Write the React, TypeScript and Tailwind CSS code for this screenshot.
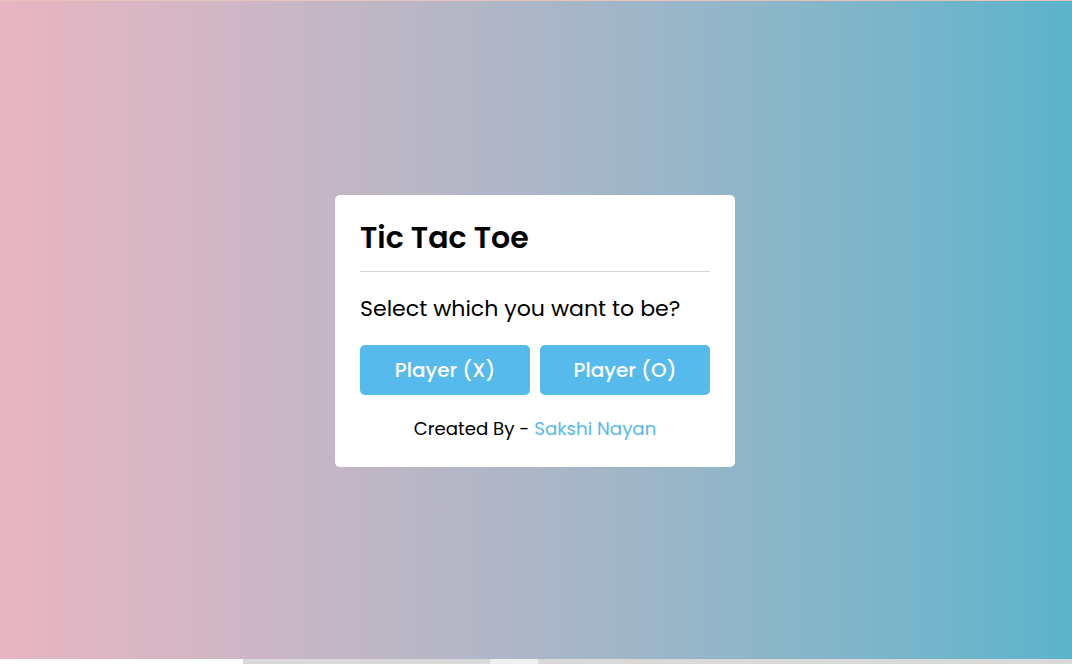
import React, { useState } from 'react';

const App: React.FC = () => {
  const [player, setPlayer] = useState<string | null>(null);

  return (
    <div className="w-full h-[664px] flex flex-col overflow-hidden font-['Poppins','Inter',sans-serif]">
      <div className="h-px bg-[#e6c3bd]" />
      <div className="flex-1 flex items-center justify-center pr-[2px] pt-[2px] bg-gradient-to-r from-[#e9b5c2] to-[#5ab4cb]">
        <div className="w-[400px] bg-white rounded-[5px] px-[25px] pt-[20px] pb-[25px]">
          <h1 className="text-[30px] font-semibold text-black leading-[45px]">Tic Tac Toe</h1>
          <div className="h-px bg-[#d4d4d4] mt-[11px]" />
          <p className="text-[22.1px] text-black mt-[20px] leading-[33px]">Select which you want to be?</p>
          <div className="flex gap-[10px] mt-[20px]">
            <button
              onClick={() => setPlayer('X')}
              className="flex-1 h-[50px] rounded-[5px] bg-[#56baec] text-white text-[20px] font-medium"
            >
              Player (X)
            </button>
            <button
              onClick={() => setPlayer('O')}
              className="flex-1 h-[50px] rounded-[5px] bg-[#56baec] text-white text-[20px] font-medium"
            >
              Player (O)
            </button>
          </div>
          <p className="text-center text-[18.2px] text-black mt-[20px] leading-[27px]">
            Created By - <span className="text-[#56baec]">Sakshi Nayan</span>
          </p>
          {player && <span className="sr-only">{player}</span>}
        </div>
      </div>
      <div className="h-[5px] flex">
        <div className="w-[243px] bg-white" />
        <div className="w-[247px] bg-[#d9d9d9]" />
        <div className="w-[48px] bg-[#efefef]" />
        <div className="flex-1 bg-[#d9d9d9]" />
      </div>
    </div>
  );
};

export default App;
